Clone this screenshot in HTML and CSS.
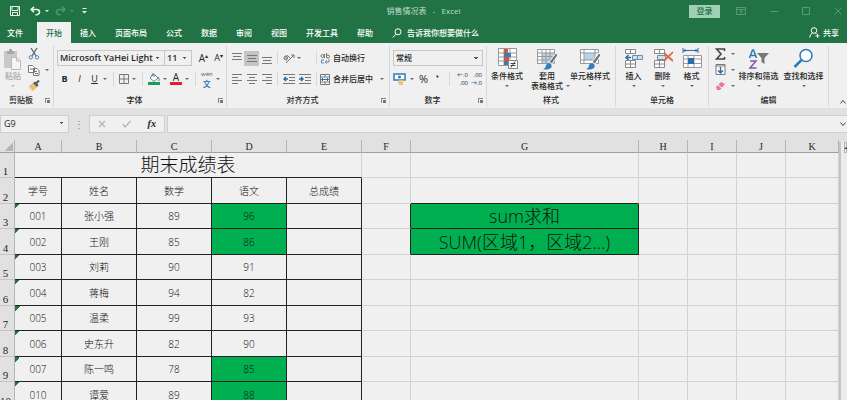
FILE: index.html
```html
<!DOCTYPE html>
<html lang="zh-CN">
<head>
  <meta charset="UTF-8">
  <title>销售情况表 - Excel</title>
  <link rel="stylesheet" href="styles.css">
</head>
<body>
  <header class="title-bar">
    <div class="quick-access">
      <button aria-label="保存"><svg width="10" height="10" viewBox="0 0 10 10"><path d="M.5.5h9v9h-9zM2 .5v4h6v-4M2.500 9.500v-3h5v3" class="line"/></svg></button>
      <button aria-label="撤消"><svg width="11" height="10" viewBox="0 0 11 10"><path d="M1.500 3.500h5q3 0 3 2.500t-4 3M4 .7 1.200 3.500 4 6.300" class="line thick"/></svg></button>
      <i class="arrow"></i>
      <button class="faded" aria-label="恢复"><svg width="11" height="10" viewBox="0 0 11 10"><path d="M9.500 3.500h-5q-3 0-3 2.500t4 3M7 .7 9.800 3.500 7 6.300" class="line thick"/></svg></button>
      <i class="arrow faded"></i>
      <button aria-label="自定义"><svg width="5" height="6" viewBox="0 0 5 6"><path d="M.5.5h4" class="line"/><path d="M0 3h5L2.500 5.500z" class="solid"/></svg></button>
    </div>
    <h1>销售情况表&nbsp;&nbsp; -&nbsp;&nbsp; Excel</h1>
    <div class="window-buttons">
      <button class="sign-in">登录</button>
      <button aria-label="功能区选项"><svg width="10" height="8" viewBox="0 0 10 8"><path d="M.5.5h9v7h-9zM.5 2.500h9M5 7V4M3.500 5 5 3.500 6.500 5" class="line"/></svg></button>
      <button aria-label="最小化"><svg width="8" height="8" viewBox="0 0 8 8"><path d="M0 4.500h8" class="line"/></svg></button>
      <button aria-label="最大化"><svg width="8" height="8" viewBox="0 0 8 8"><path d="M.5.5h7v7h-7z" class="line"/></svg></button>
      <button aria-label="关闭"><svg width="8" height="8" viewBox="0 0 8 8"><path d="m.5.5 7 7m0-7-7 7" class="line"/></svg></button>
    </div>
  </header>

  <nav class="tabs">
    <button>文件</button>
    <button class="active">开始</button>
    <button>插入</button>
    <button>页面布局</button>
    <button>公式</button>
    <button>数据</button>
    <button>审阅</button>
    <button>视图</button>
    <button>开发工具</button>
    <button>帮助</button>
    <button class="tell-me"><svg width="10" height="10" viewBox="0 0 10 10"><circle cx="6" cy="3.800" r="3" class="line"/><path d="M4 6.200.7 9.500" class="line"/></svg>告诉我你想要做什么</button>
    <button class="share"><svg width="11" height="11" viewBox="0 0 11 11"><circle cx="5" cy="3.500" r="2.800" class="line"/><path d="M.7 10.500q.2-3.500 2.800-4.500M6.500 6l1 1M6.500 8.800h4M8.500 6.800v4" class="line"/></svg>共享</button>
  </nav>

  <div class="ribbon">
    <section class="group clipboard">
      <div class="tools">
        <button class="big paste">
          <svg width="20" height="23" viewBox="0 0 20 23"><path d="M1 3h13v17H1z" fill="#c9c9c9"/><path d="M4 3h2V1h3v2h2v3H4z" fill="#a9a9a9"/><path d="M8.500 9.500h5l4 3v9h-9z" fill="#f4f4f4" stroke="#bcbcbc"/><path d="M13.500 9.500v3.500h4" fill="none" stroke="#bcbcbc"/></svg>
          粘贴<i class="arrow"></i>
        </button>
        <div class="stack">
          <button aria-label="剪切"><svg width="12" height="12" viewBox="0 0 12 12"><path d="m3 0 5 8M9 0 4 8" stroke="#666" stroke-width="1.300"/><circle cx="2.800" cy="9.300" r="1.700" fill="none" stroke="#4a7fb5"/><circle cx="9" cy="9.300" r="1.700" fill="none" stroke="#4a7fb5"/></svg></button>
          <button aria-label="复制"><svg width="12" height="12" viewBox="0 0 12 12"><path d="M.5 1.500h4l2 2v5h-6zM5.500 4.500h3.500l2 2v5H5.500z" fill="#fff" stroke="#777"/><path d="M2 5h3M7 7.500h2M7 9.500h3" stroke="#4a7fb5"/></svg><i class="arrow"></i></button>
          <button aria-label="格式刷"><svg width="12" height="11" viewBox="0 0 12 11"><path d="m1 6 4-3 4 4-4 4-2-1 1-2-2 1z" fill="#e5bf72"/><path d="m5 3 4 4 1.500-2L7 1.500z" fill="#555"/><path d="m8.500 3 2.500-2.500" stroke="#555" stroke-width="2"/></svg></button>
        </div>
      </div>
      <h2>剪贴板<i class="launcher"></i></h2>
    </section>

    <section class="group font">
      <div class="tools rows">
        <div class="row">
          <select class="font-name" aria-label="字体"><option>Microsoft YaHei Light</option></select>
          <select class="font-size" aria-label="字号"><option>11</option></select>
          <button class="letter">A<sup>▴</sup></button>
          <button class="letter small">A<sup>▾</sup></button>
        </div>
        <div class="row">
          <button class="style-key"><b>B</b></button>
          <button class="style-key"><em>I</em></button>
          <button class="style-key"><u>U</u></button>
          <i class="arrow"></i>
          <span class="divider"></span>
          <button aria-label="边框"><svg width="10" height="10" viewBox="0 0 10 10"><path d="M.5.5h9v9h-9zM5 .5v9M.5 5h9" fill="none" stroke="#777"/></svg></button>
          <i class="arrow"></i>
          <span class="divider"></span>
          <button aria-label="填充颜色"><svg width="12" height="12" viewBox="0 0 12 12"><path d="m2 5 4-4 4 4-4 3.500z" fill="#fff" stroke="#777"/><path d="M4 3V1.500q1.500-2 2 0V4M10 4q2 2 .8 4" fill="none" stroke="#4a7fb5"/><path d="M0 9h12v3H0z" fill="#12a150"/></svg></button>
          <i class="arrow"></i>
          <button class="font-color" aria-label="字体颜色">A</button>
          <i class="arrow"></i>
          <span class="divider"></span>
          <button class="pinyin"><span>wén</span>文</button>
          <i class="arrow"></i>
        </div>
      </div>
      <h2>字体<i class="launcher"></i></h2>
    </section>

    <section class="group align">
      <div class="tools rows">
        <div class="row">
          <button class="align-key" aria-label="顶端对齐"><svg width="10" height="12" viewBox="0 0 10 12"><path d="M0 1.500h10M1 4.500h8M0 7.500h10" stroke="#777"/></svg></button>
          <button class="align-key on" aria-label="垂直居中"><svg width="10" height="12" viewBox="0 0 10 12"><path d="M0 3.500h10M1 6.500h8M0 9.500h10" stroke="#777"/></svg></button>
          <button class="align-key" aria-label="底端对齐"><svg width="10" height="12" viewBox="0 0 10 12"><path d="M0 5.500h10M1 8.500h8M0 11.500h10" stroke="#777"/></svg></button>
          <span class="divider"></span>
          <button class="slot" aria-label="方向"><svg width="12" height="11" viewBox="0 0 12 11"><circle cx="2.800" cy="5" r="1.800" fill="none" stroke="#777"/><path d="m3.500 7.500-1-5M4 2l3 3M3 10l8-8M8 2h3v3" fill="none" stroke="#777"/></svg></button>
          <i class="arrow"></i>
          <span class="divider far"></span>
          <button class="text-key"><svg width="10" height="11" viewBox="0 0 10 11"><circle cx="2.500" cy="3" r="1.500" fill="none" stroke="#777"/><path d="M4.500 1v4M6.500 0v5" stroke="#777"/><circle cx="8" cy="3.500" r="1.500" fill="none" stroke="#777"/><path d="M4 7H1.500v3H4M5 9h4V6M7 7.500 5 9l2 1.500" fill="none" stroke="#6b88a5"/></svg>自动换行</button>
        </div>
        <div class="row">
          <button class="align-key" aria-label="左对齐"><svg width="10" height="10" viewBox="0 0 10 10"><path d="M0 .5h10M0 3.500h6M0 6.500h10M0 9.500h6" stroke="#777"/></svg></button>
          <button class="align-key" aria-label="居中"><svg width="10" height="10" viewBox="0 0 10 10"><path d="M0 .5h10M2 3.500h6M0 6.500h10M2 9.500h6" stroke="#777"/></svg></button>
          <button class="align-key" aria-label="右对齐"><svg width="10" height="10" viewBox="0 0 10 10"><path d="M0 .5h10M4 3.500h6M0 6.500h10M4 9.500h6" stroke="#777"/></svg></button>
          <span class="divider"></span>
          <button class="slot" aria-label="减少缩进"><svg width="12" height="10" viewBox="0 0 12 10"><path d="M0 .5h12M6 3.500h6M6 6.500h6M0 9.500h12" stroke="#777"/><path d="M5 5H1m2-2L1 5l2 2" fill="none" stroke="#2b6cab" stroke-width="1.500"/></svg></button>
          <button class="slot" aria-label="增加缩进"><svg width="12" height="10" viewBox="0 0 12 10"><path d="M0 .5h12M6 3.500h6M6 6.500h6M0 9.500h12" stroke="#777"/><path d="M0 5h4M2 3l2 2-2 2" fill="none" stroke="#2b6cab" stroke-width="1.500"/></svg></button>
          <span class="divider"></span>
          <button class="text-key"><svg width="10" height="11" viewBox="0 0 10 11"><path d="M.5.500h9v10h-9zM.5 3h9M.5 8h9M5 .5V3M5 8v2.500" fill="#fff" stroke="#777"/><path d="M1.500 5.500h7M3 4 1.500 5.500 3 7M7 4l1.500 1.500L7 7" fill="none" stroke="#2b6cab"/></svg>合并后居中</button>
          <i class="arrow end"></i>
        </div>
      </div>
      <h2>对齐方式<i class="launcher"></i></h2>
    </section>

    <section class="group number">
      <div class="tools rows">
        <div class="row">
          <select class="format" aria-label="数字格式"><option>常规</option></select>
        </div>
        <div class="row">
          <button aria-label="会计格式"><svg width="13" height="12" viewBox="0 0 13 12"><path d="M1 1h11v6H1z" fill="#fff" stroke="#2b7cb8" stroke-width="1.500"/><circle cx="6.500" cy="4" r="1.500" fill="#2b7cb8"/><path d="M6 7.500h5M5 9.500h5M6 11.500h4" stroke="#e5b960" stroke-width="1.500"/></svg></button>
          <i class="arrow"></i>
          <button class="percent">%</button>
          <button class="comma">❜</button>
          <span class="divider"></span>
          <button class="decimal"><span><b>←</b>.0</span><span>.00</span></button>
          <button class="decimal"><span>.00</span><span><b>→</b>.0</span></button>
        </div>
      </div>
      <h2>数字<i class="launcher"></i></h2>
    </section>

    <section class="group style">
      <div class="tools">
        <button class="big"><svg width="21" height="22" viewBox="0 0 21 22"><path d="M1.500.5h18v17h-18zM1.500 5h18M1.500 9h18M1.500 13h18M7 .5v17M13 .5v17" fill="#fff" stroke="#999"/><path d="M7 1h4v4H7zM7 9h5v4H7z" fill="#d9543d"/><path d="M7 5h7v4H7zM7 13h4v4H7z" fill="#3f7ab5"/><path d="M11.500 12.500h9v8h-9z" fill="#fff" stroke="#888"/><path d="M13.500 15.500h5M13.500 17.500h5M18 13.500l-4 6" stroke="#444"/></svg>条件格式<i class="arrow"></i></button>
        <button class="big"><svg width="21" height="22" viewBox="0 0 21 22"><path d="M.5 1.500h17v14H.5z" fill="#fff"/><path d="M5 5h12v10H5z" fill="#b7d3ea"/><path d="M.5 1.500h17v14H.5zM.5 5h17M.5 8.500h17M.5 12h17M5 1.500v14M9 1.500v14M13 1.500v14" fill="none" stroke="#999"/><path d="m12 14 7-9 2 2-6 9z" fill="#777" stroke="#fff"/><path d="M6 21q3-1 3-4 2-3 5-1 2 4-2 5-3 1-6 0z" fill="#2f7fbf"/></svg>套用<span>表格格式<i class="arrow side"></i></span></button>
        <button class="big wide"><svg width="21" height="22" viewBox="0 0 21 22"><path d="M.5 1.500h18v14H.5z" fill="#fff"/><path d="M4 5h11v7H4z" fill="#b7d3ea"/><path d="M.5 1.500h18v14H.5zM.5 5h18M.5 12h18M4 1.500v14M15 1.500v14" fill="none" stroke="#999"/><path d="m12 14 7-9 2 2-6 9z" fill="#777" stroke="#fff"/><path d="M6 21q3-1 3-4 2-3 5-1 2 4-2 5-3 1-6 0z" fill="#2f7fbf"/></svg>单元格样式<i class="arrow"></i></button>
      </div>
      <h2>样式</h2>
    </section>

    <section class="group cells">
      <div class="tools">
        <button class="big"><svg width="20" height="22" viewBox="0 0 20 22"><path d="M1.500 1.500h10v4h-10zM6.500 1.500v4M1.500 12.500h10v7h-10zM1.500 16h10M6.500 12.500v7" fill="#fff" stroke="#888"/><path d="M8.500 7.500h10v4h-10zM13.500 7.500v4" fill="#cfe0ef" stroke="#6f8eab"/><path d="M7 9.500H2m2.500-2.500L2 9.500 4.500 12" fill="none" stroke="#2b6cab" stroke-width="1.500"/></svg>插入<i class="arrow"></i></button>
        <button class="big"><svg width="20" height="22" viewBox="0 0 20 22"><path d="M1.500 1.500h10v4h-10zM6.500 1.500v4M1.500 12.500h10v7h-10zM1.500 16h10M6.500 12.500v7" fill="#fff" stroke="#888"/><path d="M4.500 7.500h8v4h-8z" fill="#cfe0ef" stroke="#6f8eab"/><path d="m11 5 9 8m0-9-9 9" stroke="#e0623c" stroke-width="1.700"/></svg>删除<i class="arrow"></i></button>
        <button class="big"><svg width="20" height="22" viewBox="0 0 20 22"><path d="M1 2.500h15M1 0v5M16 0v5M3.500 1 2 2.500 3.500 4M13.500 1 15 2.500 13.500 4" fill="none" stroke="#2b6cab"/><path d="M1.500 7.500h18v12h-18zM1.500 11h18M1.500 15.500h18M6 7.500v12M12 7.500v12" fill="#fff" stroke="#999"/><path d="M6 10h6v6H6z" fill="#2b6cab"/></svg>格式<i class="arrow"></i></button>
      </div>
      <h2>单元格</h2>
    </section>

    <section class="group edit">
      <div class="tools">
        <div class="stack">
          <button aria-label="求和"><svg width="11" height="12" viewBox="0 0 11 12"><path d="M9.500 3V1H1.500L6 6l-4.500 5h8V9" fill="none" stroke="#444" stroke-width="1.600"/></svg><i class="arrow"></i></button>
          <button aria-label="填充"><svg width="11" height="11" viewBox="0 0 11 11"><path d="M1 .5h9v10H1zM1 2h9" fill="#fff" stroke="#777"/><path d="M5.500 3v6M3 6.500 5.500 9 8 6.500" fill="none" stroke="#2b6cab" stroke-width="1.500"/></svg><i class="arrow"></i></button>
          <button aria-label="清除"><svg width="11" height="10" viewBox="0 0 11 10"><path d="m1 6 5-5 4 2-5 6H2z" fill="#e8798c"/><path d="m3 4 4 3" stroke="#fff"/></svg><i class="arrow"></i></button>
        </div>
        <button class="big"><svg width="21" height="22" viewBox="0 0 21 22"><path d="m1.500 10 3-8h1l3 8M2.500 7.500h5" fill="none" stroke="#2b7cb8" stroke-width="1.500"/><path d="M2 13h6l-6 7h6.500" fill="none" stroke="#8054ad" stroke-width="1.500"/><path d="M9 5h12l-4.500 5v6l-3-2v-4z" fill="#777"/></svg>排序和筛选<i class="arrow"></i></button>
        <button class="big"><svg width="21" height="22" viewBox="0 0 21 22"><circle cx="13" cy="7.500" r="6" fill="#fff" stroke="#2b7cb8" stroke-width="1.500"/><path d="m8.500 12-7 7" stroke="#2b7cb8" stroke-width="2.500"/></svg>查找和选择<i class="arrow"></i></button>
      </div>
      <h2>编辑</h2>
    </section>
    <button class="collapse" aria-label="折叠功能区"><svg width="6" height="4" viewBox="0 0 6 4"><path d="m.5 3.500 2.500-3 2.500 3" fill="none" stroke="#444"/></svg></button>
  </div>

  <div class="formula-bar">
    <select class="name-box" aria-label="名称框"><option>G9</option></select>
    <span class="dots">⋮</span>
    <div class="formula-keys">
      <button aria-label="取消"><svg width="8" height="8" viewBox="0 0 8 8"><path d="m1 1 6 6m0-6L1 7" stroke="#b5b5b5" stroke-width="1.300"/></svg></button>
      <button aria-label="输入"><svg width="9" height="8" viewBox="0 0 9 8"><path d="m.7 4 2.500 3L8.500 1" fill="none" stroke="#b5b5b5" stroke-width="1.300"/></svg></button>
      <button class="fx">fx</button>
    </div>
    <input class="formula" type="text" aria-label="编辑栏">
    <button class="expand" aria-label="展开编辑栏"><svg width="6" height="4" viewBox="0 0 6 4"><path d="m.5.5 2.500 3 2.500-3" fill="none" stroke="#444"/></svg></button>
  </div>

  <main class="workbook">
    <table class="sheet">
      <colgroup>
        <col class="w-head"><col class="w-a"><col class="w-data"><col class="w-data"><col class="w-data"><col class="w-data">
        <col class="w-small"><col class="w-g"><col class="w-small"><col class="w-small"><col class="w-small"><col>
      </colgroup>
      <thead>
        <tr><th class="corner"></th><th>A</th><th>B</th><th>C</th><th>D</th><th>E</th><th>F</th><th>G</th><th>H</th><th>I</th><th>J</th><th>K</th></tr>
      </thead>
      <tbody>
        <tr><th>1</th><td colspan="5" class="title">期末成绩表</td><td></td><td></td><td></td><td></td><td></td><td></td></tr>
        <tr><th>2</th><td class="box">学号</td><td class="box">姓名</td><td class="box">数学</td><td class="box">语文</td><td class="box">总成绩</td><td></td><td class="edge-bottom"></td><td></td><td></td><td></td><td></td></tr>
        <tr><th>3</th><td class="box id">001</td><td class="box">张小强</td><td class="box">89</td><td class="box green">96</td><td class="box"></td><td class="edge-right"></td><td class="box green note">sum求和</td><td></td><td></td><td></td><td></td></tr>
        <tr><th>4</th><td class="box id">002</td><td class="box">王刚</td><td class="box">85</td><td class="box green">86</td><td class="box"></td><td class="edge-right"></td><td class="box green note">SUM(区域1，区域2...)</td><td></td><td></td><td></td><td></td></tr>
        <tr><th>5</th><td class="box id">003</td><td class="box">刘莉</td><td class="box">90</td><td class="box">91</td><td class="box"></td><td></td><td></td><td></td><td></td><td></td><td></td></tr>
        <tr><th>6</th><td class="box id">004</td><td class="box">蒋梅</td><td class="box">94</td><td class="box">82</td><td class="box"></td><td></td><td></td><td></td><td></td><td></td><td></td></tr>
        <tr><th>7</th><td class="box id">005</td><td class="box">温柔</td><td class="box">99</td><td class="box">93</td><td class="box"></td><td></td><td></td><td></td><td></td><td></td><td></td></tr>
        <tr><th>8</th><td class="box id">006</td><td class="box">史东升</td><td class="box">82</td><td class="box">90</td><td class="box"></td><td></td><td></td><td></td><td></td><td></td><td></td></tr>
        <tr><th>9</th><td class="box id">007</td><td class="box">陈一鸣</td><td class="box">78</td><td class="box green">85</td><td class="box"></td><td></td><td></td><td></td><td></td><td></td><td></td></tr>
        <tr><th>10</th><td class="box id">010</td><td class="box">谭爱</td><td class="box">89</td><td class="box green">88</td><td class="box"></td><td></td><td></td><td></td><td></td><td></td><td></td></tr>
      </tbody>
    </table>
    <div class="scrollbar"><button aria-label="向上滚动"><i class="arrow up"></i></button></div>
  </main>
</body>
</html>
```
FILE: styles.css
```css
* {
  box-sizing: border-box;
}

body {
  margin: 0;
  height: 100vh;
  overflow: hidden;
  display: flex;
  flex-direction: column;
  background: #e1e1e1;
  color: #262626;
  font-family: "Open Sans", "Noto Sans CJK SC", sans-serif;
  font-size: 8px;
  line-height: 10px;
}

button,
select,
input {
  font: inherit;
  color: inherit;
  margin: 0;
  padding: 0;
  border: 0;
  border-radius: 0;
  background: none;
}

button {
  display: flex;
  align-items: center;
  justify-content: center;
  flex-shrink: 0;
  white-space: nowrap;
}

svg {
  display: block;
  flex-shrink: 0;
}

.line {
  fill: none;
  stroke: currentColor;
}

.thick {
  stroke-width: 1.6;
}

.solid {
  fill: currentColor;
}

.arrow {
  flex-shrink: 0;
  border: 2px solid transparent;
  border-top-color: currentColor;
  border-bottom: 0;
}

.arrow.up {
  border-top: 0;
  border-bottom: 2px solid #444;
}

/* title bar */
.title-bar {
  display: grid;
  grid-template-columns: 1fr auto 1fr;
  align-items: center;
  height: 22px;
  flex-shrink: 0;
  background: #217346;
  color: #e6f2ea;
}

.quick-access {
  display: flex;
  align-items: center;
  gap: 4px;
  padding-left: 10px;
}

.quick-access button:first-child {
  margin-right: 6px;
}

.quick-access .arrow {
  margin-right: 2px;
}

.quick-access button:last-child {
  margin-left: 2px;
}

.quick-access .faded {
  opacity: 0.25;
}

.title-bar h1 {
  margin: 0;
  font-size: 8px;
  font-weight: 400;
  color: #c2dccb;
}

.window-buttons {
  display: flex;
  align-items: center;
  justify-content: flex-end;
  gap: 24px;
  padding-right: 5px;
  color: #5b9a76;
}

.window-buttons .sign-in {
  width: 31px;
  height: 13px;
  margin-right: -8px;
  background: #9fd0b4;
  color: #217346;
  font-weight: 500;
}

/* ribbon tabs */
.tabs {
  display: flex;
  height: 21px;
  flex-shrink: 0;
  padding-right: 8px;
  background: #217346;
  color: #fff;
  font-weight: 500;
}

.tabs button {
  padding: 0 10px 0 9px;
}

.tabs button:first-child {
  padding: 0 14px 0 7px;
}

.tabs .active {
  padding: 0 9px;
  background: #f0f0f0;
  color: #217346;
}

.tabs .tell-me {
  gap: 5px;
}

.tabs .share {
  gap: 3px;
  margin-left: auto;
  padding: 0;
}

/* ribbon */
.ribbon {
  display: flex;
  height: 65px;
  flex-shrink: 0;
  background: #f0f0f0;
  font-weight: 500;
}

.ribbon .arrow {
  border-top-color: #666;
}

.group {
  display: flex;
  flex-direction: column;
  flex-shrink: 0;
  margin: 3px 0 1px;
  border-right: 1px solid #d8d8d8;
}

.clipboard { width: 54px; }
.font { width: 173px; }
.align { width: 163px; }
.number { width: 97px; }
.style { width: 129px; }
.cells { width: 93px; }
.edit { width: 120px; }

.group h2 {
  height: 12px;
  margin: 0;
  font-size: 8px;
  font-weight: 500;
  text-align: center;
}

.group h2:has(.launcher) {
  display: grid;
  grid-template-columns: 1fr 8px;
  padding-right: 3px;
}

.launcher {
  justify-self: end;
  width: 5px;
  height: 5px;
  margin-top: 3px;
  border-top: 1px solid #888;
  border-left: 1px solid #888;
  background: linear-gradient(#777, #777) right bottom / 3px 3px no-repeat;
}

.tools {
  display: flex;
  flex: 1;
}

.rows {
  flex-direction: column;
  padding-top: 3px;
  gap: 3px;
}

.row {
  display: flex;
  align-items: center;
  height: 18px;
}

.divider {
  width: 1px;
  height: 14px;
  margin: 0 5px;
  background: #d8d8d8;
}

.big {
  flex-direction: column;
  justify-content: flex-start;
  padding-top: 2px;
}

.big svg {
  margin-bottom: 1px;
}

.big .arrow {
  margin-top: 4px;
}

.big span {
  display: flex;
  align-items: center;
  gap: 3px;
  padding-left: 7px;
}

.big .side {
  margin-top: 0;
}

.stack {
  display: flex;
  flex-direction: column;
  gap: 1px;
}

.stack button {
  justify-content: flex-start;
  gap: 5px;
  height: 15px;
}

.paste {
  width: 26px;
  color: #aaa;
}

.paste .arrow {
  border-top-color: #bbb;
}

.paste svg {
  margin-bottom: 0;
}

.clipboard .stack {
  padding-left: 2px;
}

select {
  appearance: none;
  height: 16px;
  padding: 0 2px;
  border: 1px solid #c6c6c6;
  background-image: linear-gradient(45deg, transparent 50%, #555 50%), linear-gradient(-45deg, transparent 50%, #555 50%);
  background-position: right 6px top 6px, right 4px top 6px;
  background-size: 2px 2px;
  background-repeat: no-repeat;
}

.font .row {
  padding-left: 3px;
}

.font-name {
  width: 108px;
  font-size: 9px;
  font-weight: 600;
}

.font-size {
  width: 27px;
  margin-right: 4px;
  border-left: 0;
  font-size: 9px;
  font-weight: 600;
}

.letter {
  width: 15px;
  font-size: 10px;
}

.letter.small {
  font-size: 9px;
}

.letter sup {
  align-self: flex-start;
  font-size: 6px;
  line-height: 6px;
}

.style-key {
  width: 15px;
  font-size: 9px;
}

.font .row .arrow {
  margin: 0 1px;
}

.font-color {
  width: 12px;
  margin-left: 2px;
  border-bottom: 3px solid #d22;
  font-size: 10px;
  line-height: 9px;
}

.font svg + .arrow,
.font button:not(.style-key) + .arrow {
  margin-left: 3px;
}

.pinyin {
  flex-direction: column;
  line-height: 9px;
  color: #2b6cab;
}

.pinyin span {
  color: #555;
  font-size: 6px;
}

.align-key {
  width: 15px;
  height: 15px;
}

.on {
  background: #c5c5c5;
}

.align .row {
  padding-left: 2px;
}

.align .divider {
  margin: 0 3px;
}

.align .far {
  margin-left: 15px;
}

.slot {
  width: 16px;
}

.text-key {
  gap: 3px;
}

.arrow.end {
  margin-left: 7px;
}

.number .row {
  padding: 0 3px;
}

.format {
  width: 100%;
}

.number .arrow {
  margin: 0 4px;
}

.percent {
  width: 11px;
  font-size: 11px;
}

.comma {
  width: 16px;
  font-size: 9px;
}

.number .divider {
  margin: 0 4px;
}

.decimal {
  flex-direction: column;
  align-items: flex-end;
  width: 14px;
  font-size: 6px;
  line-height: 8px;
}

.decimal b {
  color: #2b6cab;
}

.style .big {
  width: 40px;
}

.style .wide {
  width: 46px;
}

.cells .tools {
  padding-left: 3px;
}

.cells .tools button {
  width: 29px;
}

.edit .stack {
  width: 27px;
  padding-left: 6px;
}

.edit .big {
  width: 45px;
}

.collapse {
  align-self: flex-end;
  margin: 0 1px 4px auto;
}

/* formula bar */
.formula-bar {
  display: flex;
  height: 18px;
  flex-shrink: 0;
  margin: 7px 0;
}

.formula-bar > * {
  border: 1px solid #cfcfcf;
}

.name-box {
  width: 69px;
  height: 18px;
  padding-left: 3px;
  background-color: #f0f0f0;
  font-size: 9px;
}

.formula-bar .dots {
  width: 20px;
  border: 0;
  color: #888;
  font-size: 10px;
  line-height: 18px;
  text-align: center;
}

.formula-keys {
  display: flex;
  justify-content: space-around;
  width: 76px;
  margin-right: 2px;
  background: #f0f0f0;
}

.fx {
  font-family: "Liberation Serif", serif;
  font-size: 10px;
  font-style: italic;
  font-weight: 700;
}

.formula {
  flex: 1;
  min-width: 0;
  border-right: 0;
  background: #f0f0f0;
}

.formula-bar .expand {
  width: 8px;
  border-width: 1px 0;
  background: #f0f0f0;
}

/* sheet */
.workbook {
  display: flex;
  flex: 1;
  min-height: 0;
}

.sheet {
  flex: 1;
  min-width: 0;
  height: max-content;
  table-layout: fixed;
  border-spacing: 0;
  background: #f0f0f0;
}

.w-head { width: 15px; }
.w-a { width: 47px; }
.w-data { width: 75px; }
.w-small { width: 49px; }
.w-g { width: 228px; }

.sheet th {
  padding: 0;
  border-right: 1px solid #b5b5b5;
  background: #e1e1e1;
  font: 10px/11px "Liberation Serif", serif;
}

.sheet thead th {
  height: 13px;
  border-bottom: 1px solid #a0a0a0;
}

.sheet .corner {
  background: linear-gradient(135deg, transparent 50%, #b5b5b5 50%) right 1px bottom 1px / 8px 8px no-repeat, #e1e1e1;
}

.sheet tbody th {
  border-bottom: 1px solid #c4c4c4;
  padding-right: 3px;
  font-size: 11px;
  vertical-align: bottom;
  white-space: nowrap;
}

.sheet tbody tr {
  height: 25px;
}

.sheet tbody tr:nth-child(even) {
  height: 26px;
}

.sheet td {
  padding: 0;
  border-right: 1px solid #d2d2d2;
  border-bottom: 1px solid #d2d2d2;
  color: #111;
  font-size: 10px;
  font-weight: 300;
  line-height: 24px;
  text-align: center;
  white-space: nowrap;
}

.sheet .title {
  border-bottom-color: #222;
  font-size: 19px;
}

.sheet .box {
  border-color: #222;
}

.sheet .edge-bottom {
  border-bottom-color: #222;
}

.sheet .edge-right {
  border-right-color: #222;
}

.sheet .green {
  background: #00b050;
}

.sheet .note {
  font-size: 18px;
}

.sheet .id {
  background: linear-gradient(135deg, #1e7b34 50%, transparent 50%) 0 0 / 5px 5px no-repeat;
}

.scrollbar {
  width: 8px;
  margin-top: 2px;
  padding-left: 3px;
  border-left: 2px solid #c4c4c4;
  background: #ececec;
}

.scrollbar button {
  height: 11px;
  width: 100%;
  border: 1px solid #b5b5b5;
}
```
